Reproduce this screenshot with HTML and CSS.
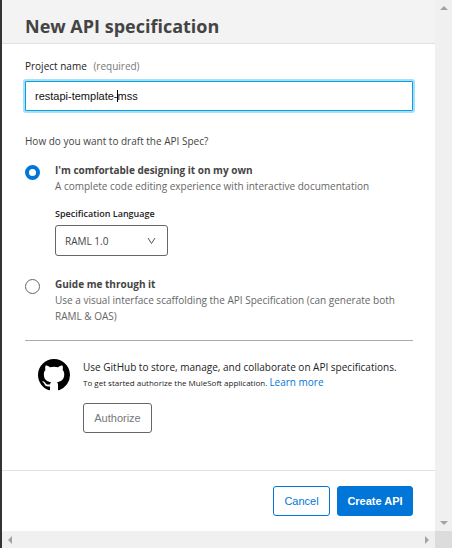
FILE: index.html
```html
<!DOCTYPE html>
<html lang="en">
<head>
<meta charset="utf-8">
<title>New API specification</title>
<link rel="stylesheet" href="styles.css">
</head>
<body>
<div class="viewport">
  <form class="dialog">
    <header class="dialog-header"><h1>New API specification</h1></header>
    <main class="dialog-body">
      <label class="field-label" for="name">Project name <span class="hint">(required)</span></label>
      <div class="name-field">
        <input class="name-input" id="name" type="text" value="restapi-template-mss">
        <span class="caret"></span>
      </div>
      <p class="question">How do you want to draft the API Spec?</p>
      <div class="option">
        <input class="radio" type="radio" name="mode" id="own" checked>
        <div class="option-text">
          <label class="option-title" for="own">I'm comfortable designing it on my own</label>
          <p class="option-desc">A complete code editing experience with interactive documentation</p>
          <label class="select-label" for="lang">Specification Language</label>
          <div class="select-wrap">
            <select class="select" id="lang"><option>RAML 1.0</option></select>
            <svg class="chevron" viewBox="0 0 9 8"><path d="M1 1l3.500 5.500L8 1" fill="none" stroke="#555" stroke-width="1"/></svg>
          </div>
        </div>
      </div>
      <div class="option guide">
        <input class="radio" type="radio" name="mode" id="guide">
        <div class="option-text">
          <label class="option-title" for="guide">Guide me through it</label>
          <p class="option-desc">Use a visual interface scaffolding the API Specification (can generate both RAML &amp; OAS)</p>
        </div>
      </div>
      <section class="github">
        <svg class="github-logo" viewBox="0 0 16 16"><path d="M8 0C3.580 0 0 3.580 0 8c0 3.540 2.290 6.530 5.470 7.590.4.070.55-.17.55-.38 0-.19-.01-.82-.01-1.490-2.010.37-2.530-.49-2.690-.94-.09-.23-.48-.94-.82-1.130-.28-.15-.68-.52-.01-.53.63-.01 1.080.58 1.230.82.72 1.210 1.870.87 2.330.66.07-.52.28-.87.51-1.070-1.780-.2-3.640-.89-3.640-3.950 0-.87.31-1.590.82-2.150-.08-.2-.36-1.020.08-2.120 0 0 .67-.21 2.200.82.64-.18 1.320-.27 2-.27s1.360.09 2 .27c1.530-1.040 2.200-.82 2.200-.82.44 1.100.16 1.920.08 2.120.51.56.82 1.270.82 2.150 0 3.070-1.870 3.750-3.650 3.950.29.25.54.73.54 1.480 0 1.070-.01 1.930-.01 2.200 0 .21.15.46.55.38A8.010 8.010 0 0 0 16 8c0-4.420-3.580-8-8-8z"/></svg>
        <div class="github-text">
          <p class="github-title">Use GitHub to store, manage, and collaborate on API specifications.</p>
          <p class="github-note">To get started authorize the MuleSoft application. <a class="link" href="#">Learn more</a></p>
          <button class="button authorize" type="button">Authorize</button>
        </div>
      </section>
    </main>
    <footer class="dialog-footer">
      <button class="button cancel" type="button">Cancel</button>
      <button class="button create" type="button">Create API</button>
    </footer>
  </form>
  <div class="bar vertical"><i class="arrow up"></i><i class="arrow down"></i></div>
  <div class="bar horizontal"><i class="arrow left"></i><i class="arrow right"></i></div>
  <div class="corner"></div>
</div>
</body>
</html>
```
FILE: styles.css
```css
* { box-sizing: border-box; }
body { margin: 0; font-family: "Open Sans", "Noto Sans", sans-serif; font-size: 10px; line-height: 16px; color: #444; background: #fff; }
h1, p { margin: 0; }
.viewport { display: grid; grid-template-columns: minmax(0, 1fr) 17px; grid-template-rows: 1fr 17px; min-height: 100vh; border-left: 2px solid #333; }
.dialog { display: flex; flex-direction: column; }
.dialog-header { height: 44px; padding: 10px 23px 0; background: #f3f3f3; border-bottom: 1px solid #e0e0e0; }
h1 { font-size: 18px; line-height: 32px; font-weight: 700; color: #444; white-space: nowrap; }
.dialog-body { flex: 1; padding: 14px 22px 0 23px; }
.field-label { display: block; color: #222; }
.hint { margin-left: 4px; color: #777; }
.name-field { position: relative; margin-top: 7px; }
.name-input { display: block; width: 100%; height: 30px; padding: 0 9px; border: 1px solid #00a2df; border-radius: 1px; outline: none; box-shadow: 0 0 0 2px #a9e0f5; background: #fff; color: #111; font: 11px "Liberation Sans", sans-serif; }
.caret { position: absolute; left: 92px; top: 9px; width: 1px; height: 12px; background: #000; }
.question { margin-top: 22px; }
.option { display: grid; grid-template-columns: 15px minmax(0, 1fr); column-gap: 15px; margin-top: 13px; }
.radio { appearance: none; width: 15px; height: 15px; margin: 3px 0 0; border: 1px solid #666; border-radius: 50%; background: #fff; }
.radio:checked { border: 4px solid #0176d8; }
.option-title { display: block; font-weight: 700; }
.option-desc { color: #666; }
.select-label { display: block; margin-top: 12px; font-size: 9px; font-weight: 600; color: #222; }
.select-wrap { position: relative; width: 113px; margin-top: 3px; }
.select { appearance: none; display: block; width: 100%; height: 31px; padding: 0 9px; border: 1px solid #666; border-radius: 3px; background: #fff; color: #444; font: inherit; }
.chevron { position: absolute; right: 12px; top: 12px; width: 9px; height: 8px; pointer-events: none; }
.guide { margin-top: 20px; }
.github { display: grid; grid-template-columns: 32px minmax(0, 1fr); column-gap: 13px; margin-top: 16px; padding: 18px 0 0 13px; border-top: 1px solid #aaa; }
.github-logo { width: 32px; height: 32px; }
.github-title { color: #222; white-space: nowrap; }
.github-note { font-size: 8px; line-height: 14px; color: #222; white-space: nowrap; }
.link { color: #0176d8; font-size: 10px; text-decoration: none; }
.button { height: 30px; padding: 0; border: 1px solid #0176d8; border-radius: 3px; background: #fff; color: #0176d8; font: 11px "Liberation Sans", sans-serif; }
.authorize { width: 69px; margin-top: 13px; border-color: #666; color: #777; }
.dialog-footer { display: flex; justify-content: flex-end; gap: 7px; padding: 15px 22px; border-top: 1px solid #e0e0e0; }
.cancel { width: 57px; }
.create { width: 76px; background: #0176d8; color: #fff; font-weight: 700; }
.bar { display: flex; justify-content: space-between; align-items: center; background: #f0f0f0; padding: 6px; }
.vertical { flex-direction: column; }
.corner { background: #dcdcdc; }
.arrow { width: 0; height: 0; border: 4px solid transparent; }
.up { border-top: 0; border-bottom-color: #a3a3a3; }
.down { border-bottom: 0; border-top-color: #a3a3a3; }
.left { border-left: 0; border-right-color: #a3a3a3; }
.right { border-right: 0; border-left-color: #a3a3a3; }
```
